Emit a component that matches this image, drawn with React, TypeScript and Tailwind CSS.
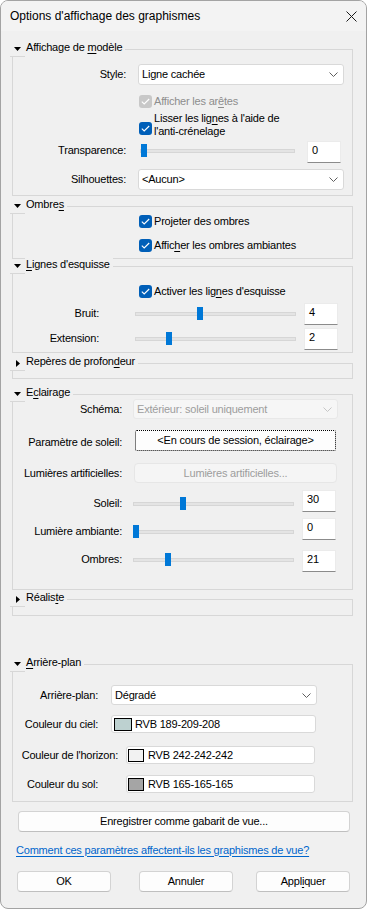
import React from "react";

const font = "font-['Liberation_Sans',Arial,sans-serif]";

function U({ children }: { children: React.ReactNode }) {
  return <span className="underline decoration-1 underline-offset-[2px]">{children}</span>;
}

function Chevron({ disabled }: { disabled?: boolean }) {
  return (
    <svg width="9" height="5" viewBox="0 0 9 5" className="shrink-0">
      <path d="M0.5 0.5 L4.5 4.5 L8.5 0.5" fill="none" stroke={disabled ? "#c6c6c6" : "#5f5f5f"} strokeWidth="1" />
    </svg>
  );
}

function Combo({ value, className = "", disabled }: { value: string; className?: string; disabled?: boolean }) {
  return (
    <div
      className={`flex shrink-0 items-center justify-between rounded-[3px] border pl-[3px] pr-[5px] ${
        disabled ? "border-[#e8e8e8] bg-[#f6f6f6] text-[#9d9d9d]" : "border-[#d9d9d9] bg-white"
      } ${className}`}
    >
      <span>{value}</span>
      <Chevron disabled={disabled} />
    </div>
  );
}

function Check({ disabled, className = "" }: { disabled?: boolean; className?: string }) {
  return (
    <span
      className={`flex h-[13px] w-[13px] shrink-0 items-center justify-center rounded-[3px] ${
        disabled ? "bg-[#c8c8c8]" : "bg-[#005fb8]"
      } ${className}`}
    >
      <svg width="9" height="7" viewBox="0 0 9 7">
        <path d="M0.8 3.6 L3.2 6 L8.2 1" fill="none" stroke="white" strokeWidth="1.1" />
      </svg>
    </span>
  );
}

function Slider({ pos, className = "" }: { pos: number; className?: string }) {
  return (
    <div className={`relative flex h-[13px] shrink-0 items-center ${className}`}>
      <div className="h-[4px] w-full border border-[#d6d6d6] bg-[#e4e4e4]" />
      <div className="absolute top-0 h-[13px] w-[6px] bg-[#0078d7]" style={{ left: pos }} />
    </div>
  );
}

function NumBox({ value, className = "" }: { value: string; className?: string }) {
  return (
    <div
      className={`h-[22px] w-[34px] shrink-0 border border-[#ebebeb] border-b-[#8b8b8b] bg-white pl-[4px] pt-[1px] leading-[14px] ${className}`}
    >
      {value}
    </div>
  );
}

function Btn({ children, className = "" }: { children: React.ReactNode; className?: string }) {
  return (
    <div
      className={`flex h-[21px] shrink-0 items-center justify-center rounded-[4px] border border-[#d3d3d3] border-b-[#bfbfbf] bg-[#fdfdfd] ${className}`}
    >
      {children}
    </div>
  );
}

function Group({
  title,
  open = true,
  className = "",
  children,
}: {
  title: React.ReactNode;
  open?: boolean;
  className?: string;
  children?: React.ReactNode;
}) {
  return (
    <div className={`ml-[11px] mr-[13px] border border-[#d7d7d7] ${className}`}>
      <div className="-ml-[3px] -mt-[8px] flex h-[15px] items-start">
        <div className="flex h-[15px] w-[15px] shrink-0 items-center justify-center border-b border-[#d7d7d7] bg-[#f0f0f0]">
          {open ? (
            <svg width="7" height="4" viewBox="0 0 7 4">
              <path d="M0 0 H7 L3.5 4 Z" fill="#000" />
            </svg>
          ) : (
            <svg width="4" height="7" viewBox="0 0 4 7">
              <path d="M0 0 L4 3.5 L0 7 Z" fill="#000" />
            </svg>
          )}
        </div>
        <span className="-mt-[2px] bg-[#f0f0f0] pl-[1px] pr-[3px] leading-[15px]">{title}</span>
      </div>
      {children}
    </div>
  );
}

function SliderRow({
  label,
  value,
  pos,
  rowClass,
  alignClass,
  labelClass,
  trackClass,
  inputClass,
}: {
  label: string;
  value: string;
  pos: number;
  rowClass: string;
  alignClass: string;
  labelClass: string;
  trackClass: string;
  inputClass: string;
}) {
  return (
    <div className={`flex items-start ${rowClass}`}>
      <div className={`flex h-[15px] items-center ${alignClass}`}>
        <span className={`flex shrink-0 justify-end ${labelClass}`}>{label}</span>
        <Slider pos={pos} className={trackClass} />
      </div>
      <NumBox value={value} className={inputClass} />
    </div>
  );
}

function Label({ children, className = "" }: { children: React.ReactNode; className?: string }) {
  return <span className={`flex shrink-0 justify-end ${className}`}>{children}</span>;
}

function Swatch({ color, className = "" }: { color: string; className?: string }) {
  return <span className={`h-[13px] shrink-0 border border-black ${color} ${className}`} />;
}

export default function App() {
  return (
    <div
      className={`h-[910px] w-[367px] whitespace-nowrap bg-white text-[11px] leading-[15px] tracking-[-0.2px] text-black ${font}`}
    >
      <div className="flex h-[909px] flex-col overflow-hidden rounded-[8px] border border-[#a3a3a3] bg-[#f0f0f0]">
        {/* barre de titre */}
        <div className="flex h-[30px] shrink-0 items-center justify-between bg-[#f3f3f3] pl-[9px] pr-[9px]">
          <span className="text-[12px] tracking-normal">Options d'affichage des graphismes</span>
          <svg width="11" height="11" viewBox="0 0 11 11">
            <path d="M0.5 0.5 L10.5 10.5 M10.5 0.5 L0.5 10.5" stroke="#1a1a1a" strokeWidth="1" />
          </svg>
        </div>

        {/* Affichage de modèle */}
        <Group title={<>Affichage de <U>m</U>odèle</>} className="mt-[18px] pb-[5px]">
          <div className="mt-[7px] flex h-[21px] items-center">
            <Label className="w-[113px]">Style:</Label>
            <Combo value="Ligne cachée" className="ml-[12px] h-[21px] w-[206px]" />
          </div>
          <div className="mt-[9px] flex h-[14px] items-center pl-[126px]">
            <Check disabled />
            <span className="ml-[2px] text-[#8d8d8d]">
              Afficher les ar<U>ê</U>tes
            </span>
          </div>
          <div className="mt-[4px] flex items-start pl-[126px]">
            <Check className="mt-[10px]" />
            <span className="ml-[2px] leading-[13px]">
              Lisser les lig<U>n</U>es à l'aide de
              <br />
              l'anti-crénelage
            </span>
          </div>
          <SliderRow
            label="Transparence:"
            value="0"
            pos={1}
            rowClass="mt-[3px]"
            alignClass="mt-[2px]"
            labelClass="w-[113px]"
            trackClass="ml-[14px] w-[155px]"
            inputClass="ml-[12px]"
          />
          <div className="mt-[6px] flex h-[21px] items-center">
            <Label className="w-[113px]">Silhouettes:</Label>
            <Combo value="<Aucun>" className="ml-[12px] h-[21px] w-[206px]" />
          </div>
        </Group>

        {/* Ombres */}
        <Group title={<>Ombre<U>s</U></>} className="mt-[10px] pb-[6px]">
          <div className="flex h-[14px] items-center pl-[126px]">
            <Check />
            <span className="ml-[2px]">
              Pro<U>j</U>eter des ombres
            </span>
          </div>
          <div className="mt-[10px] flex h-[14px] items-center pl-[126px]">
            <Check />
            <span className="ml-[2px]">
              Affic<U>h</U>er les ombres ambiantes
            </span>
          </div>
        </Group>

        {/* Lignes d'esquisse */}
        <Group title={<><U>L</U>ignes d'esquisse</>} className="mt-[7px] pb-[2px]">
          <div className="mt-[10px] flex h-[14px] items-center pl-[126px]">
            <Check />
            <span className="ml-[2px]">
              Activer les lig<U>n</U>es d'esquisse
            </span>
          </div>
          <SliderRow
            label="Bruit:"
            value="4"
            pos={62}
            rowClass="mt-[5px]"
            alignClass="mt-[3px]"
            labelClass="w-[86px]"
            trackClass="ml-[36px] w-[161px]"
            inputClass="ml-[8px]"
          />
          <SliderRow
            label="Extension:"
            value="2"
            pos={31}
            rowClass="mt-[3px]"
            alignClass="mt-[3px]"
            labelClass="w-[86px]"
            trackClass="ml-[36px] w-[161px]"
            inputClass="ml-[8px]"
          />
        </Group>

        {/* Repères de profondeur */}
        <Group title={<>Repères de profon<U>d</U>eur</>} open={false} className="mt-[10px] pb-[7px]" />

        {/* Eclairage */}
        <Group title={<>E<U>c</U>lairage</>} className="mt-[15px] pb-[17px]">
          <div className="-mt-[3px] flex h-[20px] items-center">
            <Label className="w-[109px]">Schéma:</Label>
            <Combo value="Extérieur: soleil uniquement" disabled className="ml-[11px] h-[20px] w-[205px]" />
          </div>
          <div className="mt-[11px] flex h-[21px] items-start">
            <Label className="mt-[5px] w-[109px]">Paramètre de soleil:</Label>
            <div className="ml-[13px] flex h-[21px] w-[201px] shrink-0 items-center justify-center rounded-[2px] border border-dotted border-black bg-[#fdfdfd]">
              &lt;En cours de session, éclairage&gt;
            </div>
          </div>
          <div className="mt-[12px] flex h-[20px] items-center">
            <Label className="w-[109px]">Lumières artificielles:</Label>
            <div className="ml-[12px] flex h-[20px] w-[203px] shrink-0 items-center justify-center rounded-[4px] border border-[#e6e6e6] bg-[#f5f5f5] text-[#9d9d9d]">
              Lumières artificielles...
            </div>
          </div>
          <SliderRow
            label="Soleil:"
            value="30"
            pos={47}
            rowClass="mt-[7px]"
            alignClass="mt-[6px]"
            labelClass="w-[109px]"
            trackClass="ml-[11px] w-[161px]"
            inputClass="ml-[8px]"
          />
          <SliderRow
            label="Lumière ambiante:"
            value="0"
            pos={0}
            rowClass="mt-[6px]"
            alignClass="mt-[6px]"
            labelClass="w-[109px]"
            trackClass="ml-[11px] w-[161px]"
            inputClass="ml-[8px]"
          />
          <SliderRow
            label="Ombres:"
            value="21"
            pos={32}
            rowClass="mt-[10px]"
            alignClass="mt-[2px]"
            labelClass="w-[109px]"
            trackClass="ml-[11px] w-[161px]"
            inputClass="ml-[8px]"
          />
        </Group>

        {/* Réaliste */}
        <Group title={<>Réalis<U>t</U>e</>} open={false} className="mt-[9px] pb-[8px]" />

        {/* Arrière-plan */}
        <Group title={<><U>A</U>rrière-plan</>} className="mt-[48px] pb-[8px]">
          <div className="mt-[13px] flex h-[20px] items-center">
            <Label className="w-[85px]">Arrière-plan:</Label>
            <Combo value="Dégradé" className="ml-[13px] h-[20px] w-[206px]" />
          </div>
          <div className="mt-[10px] flex h-[18px] items-center">
            <Label className="w-[85px]">Couleur du ciel:</Label>
            <div className="ml-[13px] flex h-[18px] w-[205px] shrink-0 items-center rounded-[3px] border border-[#d9d9d9] bg-white">
              <Swatch color="bg-[#bdd1d0]" className="ml-[2px] w-[18px]" />
              <span className="ml-[3px]">RVB 189-209-208</span>
            </div>
          </div>
          <div className="mt-[13px] flex h-[18px] items-center">
            <Label className="w-[105px]">Couleur de l'horizon:</Label>
            <div className="ml-[8px] flex h-[18px] w-[189px] shrink-0 items-center rounded-[3px] border border-[#d9d9d9] bg-white">
              <Swatch color="bg-[#f2f2f2]" className="ml-[1px] w-[16px]" />
              <span className="ml-[4px]">RVB 242-242-242</span>
            </div>
          </div>
          <div className="mt-[11px] flex h-[18px] items-center">
            <Label className="w-[85px]">Couleur du sol:</Label>
            <div className="ml-[28px] flex h-[18px] w-[189px] shrink-0 items-center rounded-[3px] border border-[#d9d9d9] bg-white">
              <Swatch color="bg-[#a5a5a5]" className="ml-[1px] w-[16px]" />
              <span className="ml-[4px]">RVB 165-165-165</span>
            </div>
          </div>
        </Group>

        <Btn className="ml-[17px] mt-[9px] w-[332px]">Enregistrer comme gabarit de vue...</Btn>

        <div className="ml-[15px] mt-[10px] flex h-[16px] items-center">
          <span className="text-[#0066cc] underline decoration-1 underline-offset-[2px]">
            Comment ces paramètres affectent-ils les graphismes de vue?
          </span>
        </div>

        <div className="mt-[13px] flex">
          <Btn className="ml-[16px] w-[94px]">OK</Btn>
          <Btn className="ml-[28px] w-[94px]">Annuler</Btn>
          <Btn className="ml-[23px] w-[94px]">
            Appl<U>i</U>quer
          </Btn>
        </div>
      </div>
    </div>
  );
}
